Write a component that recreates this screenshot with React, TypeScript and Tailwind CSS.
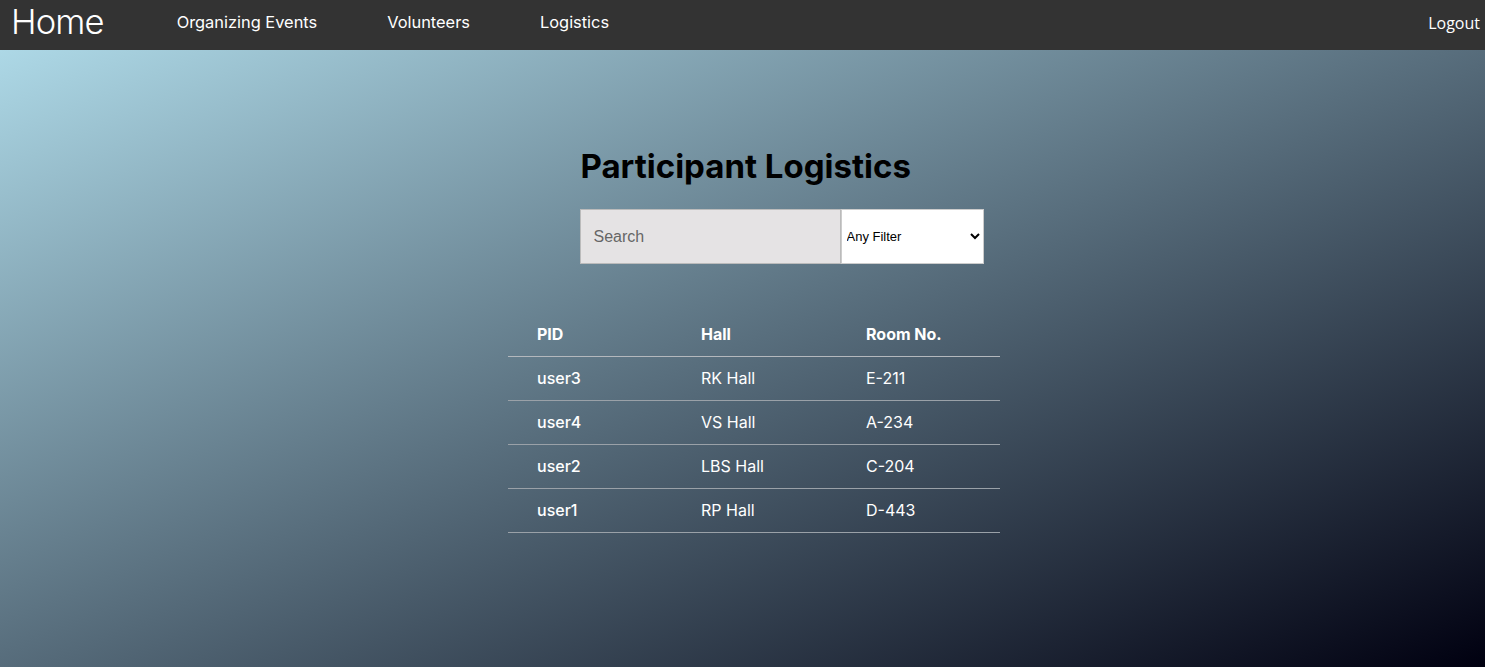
const rows = [
  { pid: "user3", hall: "RK Hall", room: "E-211" },
  { pid: "user4", hall: "VS Hall", room: "A-234" },
  { pid: "user2", hall: "LBS Hall", room: "C-204" },
  { pid: "user1", hall: "RP Hall", room: "D-443" },
];

const poppins = "font-['Inter','Noto_Sans',sans-serif]";

export default function App() {
  return (
    <div className={`min-h-[667px] flex flex-col ${poppins}`}>
      {/* Navbar */}
      <nav className="h-[50px] bg-[#333333] flex items-center pb-[5px] text-white">
        <a className="ml-[11px] text-[34.5px] font-light leading-none tracking-tight">Home</a>
        <div className="flex items-center">
          <a className="ml-[73px] text-[16.4px]">Organizing Events</a>
          <a className="ml-[70px] text-[16.4px]">Volunteers</a>
          <a className="ml-[70px] text-[16.4px]">Logistics</a>
        </div>
        <a className="ml-auto mr-[5px] text-[16px] font-['Open_Sans',sans-serif]">Logout</a>
      </nav>

      {/* Content */}
      <main className="flex-1 bg-[linear-gradient(to_bottom_right,#add8e6,#000010)] flex flex-col items-center">
        <div className="ml-[78px] mt-[96px] w-[404px]">
          <h1 className="ml-[1px] text-[33px] font-bold leading-[40px] text-black whitespace-nowrap">
            Participant Logistics
          </h1>
          <div className="mt-[23px] flex h-[55px]">
            <input
              placeholder="Search"
              className="w-[261px] h-full bg-[#e5e3e4] border border-[#bbb] px-[13px] text-[16px] font-['Liberation_Sans',sans-serif] placeholder:text-[#666] outline-none"
            />
            <select className="w-[143px] h-full bg-white border border-[#ccc] pl-[1px] text-[13px] text-black font-['Liberation_Sans',sans-serif]">
              <option>Any Filter</option>
              <option>PID</option>
              <option>Hall</option>
              <option>Room No.</option>
            </select>
          </div>
        </div>

        <table className="ml-[23px] mt-[46px] w-[492px] border-collapse text-white text-[16px]">
          <thead>
            <tr className="h-[46px] border-b border-[#b4b8bd]">
              <th className="w-[164px] pl-[29px] pt-[2px] text-left font-bold">PID</th>
              <th className="w-[164px] pl-[29px] pt-[2px] text-left font-bold">Hall</th>
              <th className="w-[164px] pl-[30px] pt-[2px] text-left font-bold">Room No.</th>
            </tr>
          </thead>
          <tbody>
            {rows.map((r) => (
              <tr key={r.pid} className="h-[44px] border-b border-[#9aa1a8]">
                <td className="pl-[29px] font-medium">{r.pid}</td>
                <td className="pl-[29px]">{r.hall}</td>
                <td className="pl-[30px]">{r.room}</td>
              </tr>
            ))}
          </tbody>
        </table>
      </main>
    </div>
  );
}
